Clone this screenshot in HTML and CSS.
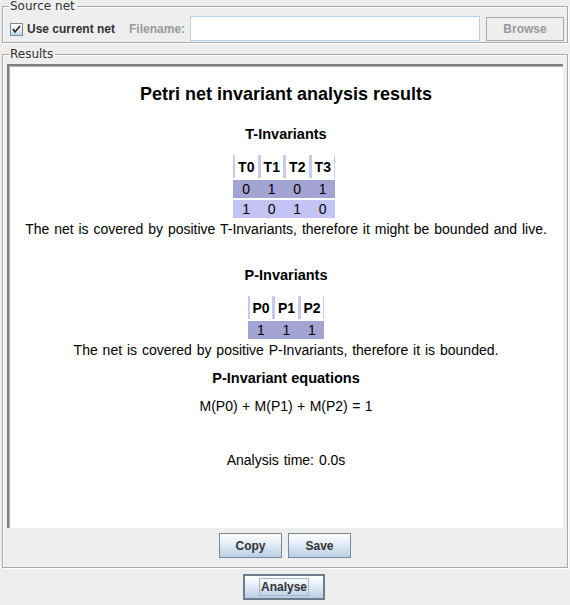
FILE: index.html
```html
<!DOCTYPE html>
<html>
<head>
<meta charset="utf-8">
<link rel="stylesheet" href="styles.css">
</head>
<body>
<div class="frame">
  <fieldset class="group source">
    <legend class="legend">Source net</legend>
    <div class="source-row">
      <label class="check">
        <span class="box">
          <svg width="13" height="13" viewBox="0 0 13 13">
            <path d="M3 6 L5 9 L10 3" fill="none" stroke="#222" stroke-width="1.6"/>
          </svg>
        </span>
        <span class="check-label">Use current net</span>
      </label>
      <span class="fn-label">Filename:</span>
      <span class="field"></span>
      <span class="btn btn-disabled">Browse</span>
    </div>
  </fieldset>
  <fieldset class="group results">
    <legend class="legend">Results</legend>
    <div class="pane">
      <div class="content">
        <div class="title">Petri net invariant analysis results</div>
        <div class="sub sub-t">T-Invariants</div>
        <table class="inv inv-t">
          <tr><th>T0</th><th>T1</th><th>T2</th><th>T3</th></tr>
          <tr class="r1"><td>0</td><td>1</td><td>0</td><td>1</td></tr>
          <tr class="r2"><td>1</td><td>0</td><td>1</td><td>0</td></tr>
        </table>
        <div class="para para-t">The net is covered by positive T-Invariants, therefore it might be bounded and live.</div>
        <div class="sub sub-p">P-Invariants</div>
        <table class="inv inv-p">
          <tr><th>P0</th><th>P1</th><th>P2</th></tr>
          <tr class="r1"><td>1</td><td>1</td><td>1</td></tr>
        </table>
        <div class="para para-p">The net is covered by positive P-Invariants, therefore it is bounded.</div>
        <div class="sub sub-eq">P-Invariant equations</div>
        <div class="para para-eq">M(P0) + M(P1) + M(P2) = 1</div>
        <div class="para para-time">Analysis time: 0.0s</div>
      </div>
    </div>
    <div class="btn-row">
      <span class="btn btn-copy">Copy</span>
      <span class="btn btn-save">Save</span>
    </div>
  </fieldset>
  <div class="bottom-row">
    <span class="btn btn-analyse"><span class="focus">Analyse</span></span>
  </div>
</div>
</body>
</html>
```
FILE: styles.css
```css
html, body {
  margin: 0;
  padding: 0;
  background: #eeeeee;
  width: 570px;
  height: 605px;
  overflow: hidden;
}
.frame {
  font-family: "DejaVu Sans", sans-serif;
  color: #333;
  padding: 0 2px;
}
.group {
  margin: 0;
  border: 1px solid #a8a8a8;
  box-shadow: 1px 1px 0 #ffffff, inset 1px 1px 0 #ffffff;
  padding: 0;
  min-width: 0;
  box-sizing: border-box;
  width: 566px;
}
.legend {
  font-family: "DejaVu Sans", sans-serif;
  font-size: 12px;
  line-height: 12px;
  color: #333;
  padding: 0 2px 0 1px;
  margin-left: 6px;
}
.source {
  height: 43px;
}
.source-row {
  display: flex;
  align-items: center;
  height: 25px;
  margin-top: 4px;
  padding-left: 7px;
  white-space: nowrap;
}
.check {
  display: flex;
  align-items: center;
}
.box {
  width: 13px;
  height: 13px;
  box-sizing: border-box;
  border: 1px solid #7a8a99;
  background: linear-gradient(#ffffff, #c8d8ea);
  display: block;
  margin-top: 1px;
  flex: none;
}
.box svg { display: block; margin: -1px 0 0 -1px; }
.check-label {
  font-family: "Liberation Sans", Arial, sans-serif;
  font-weight: bold;
  font-size: 12px;
  color: #333;
  margin-left: 4px;
}
.fn-label {
  font-family: "Liberation Sans", Arial, sans-serif;
  font-weight: bold;
  font-size: 12px;
  color: #999;
  margin-left: 14px;
}
.field {
  width: 290px;
  height: 25px;
  box-sizing: border-box;
  border: 1px solid #b8cfe5;
  background: #fff;
  margin-left: 5px;
  flex: none;
}
.btn {
  display: inline-flex;
  align-items: center;
  justify-content: center;
  box-sizing: border-box;
  border: 1px solid #7a8a99;
  background: linear-gradient(#ffffff 0%, #e5eef8 40%, #b8cfe5 100%);
  font-family: "Liberation Sans", Arial, sans-serif;
  font-weight: bold;
  font-size: 12px;
  color: #333;
  flex: none;
}
.btn-disabled {
  width: 78px;
  height: 24px;
  margin-left: 6px;
  margin-top: 1px;
  background: #eeeeee;
  border-color: #a8a8a8;
  color: #999;
}
.results {
  margin-top: 5px;
  height: 520px;
}
.pane {
  margin: 4px 0 0 4px;
  width: 556px;
  height: 464px;
  box-sizing: border-box;
  background: #fff;
  border-top: 2px solid #7f7f7f;
  border-left: 2px solid #7f7f7f;
  box-shadow: inset 1px 1px 0 #b0b0b0;
  overflow: hidden;
}
.content {
  font-family: "Liberation Sans", Arial, sans-serif;
  color: #000;
  text-align: center;
  padding-top: 17px;
}
.title {
  font-size: 18px;
  font-weight: bold;
  line-height: 22px;
}
.sub {
  font-size: 14.5px;
  font-weight: bold;
  line-height: 18px;
}
.sub-t { margin-top: 20px; }
.sub-p { margin-top: 29px; }
.sub-eq { margin-top: 11px; }
.para {
  font-size: 14px;
  line-height: 16px;
  word-spacing: 1px;
}
.para-t { margin-top: 1px; }
.para-p { margin-top: 1px; }
.para-eq { margin-top: 11px; word-spacing: 0.5px; }
.para-time { margin-top: 38px; }
.inv {
  margin: 10px auto 0;
  border-collapse: separate;
  border-spacing: 0 2px;
  font-size: 14px;
}
.inv-t { margin-left: 224px; }
.inv th {
  height: 23px;
  padding: 0;
  border-left: 2px solid #c8c8f0;
  border-right: 1px solid #c8c8f0;
  background: #fff;
  font-weight: bold;
  width: 22.5px;
}
.inv td {
  height: 18px;
  padding: 0;
  width: 22.5px;
  border-left: 2px solid transparent;
  border-right: 1px solid transparent;
}
.inv .r1 td { background: #a4a4d4; }
.inv .r2 td { background: #c4c4f4; }
.btn-row {
  display: flex;
  justify-content: center;
  gap: 6px;
  margin-top: 5px;
}
.btn-copy { width: 63px; height: 25px; }
.btn-save { width: 63px; height: 25px; }
.bottom-row {
  display: flex;
  justify-content: center;
  margin-top: 6px;
}
.btn-analyse {
  width: 82px;
  height: 26px;
  border: 2px solid #6d7b8a;
  margin-left: -2px;
}
.focus {
  border: 1px solid #a3b8cc;
  padding: 0 1px;
  line-height: 16px;
}
```
